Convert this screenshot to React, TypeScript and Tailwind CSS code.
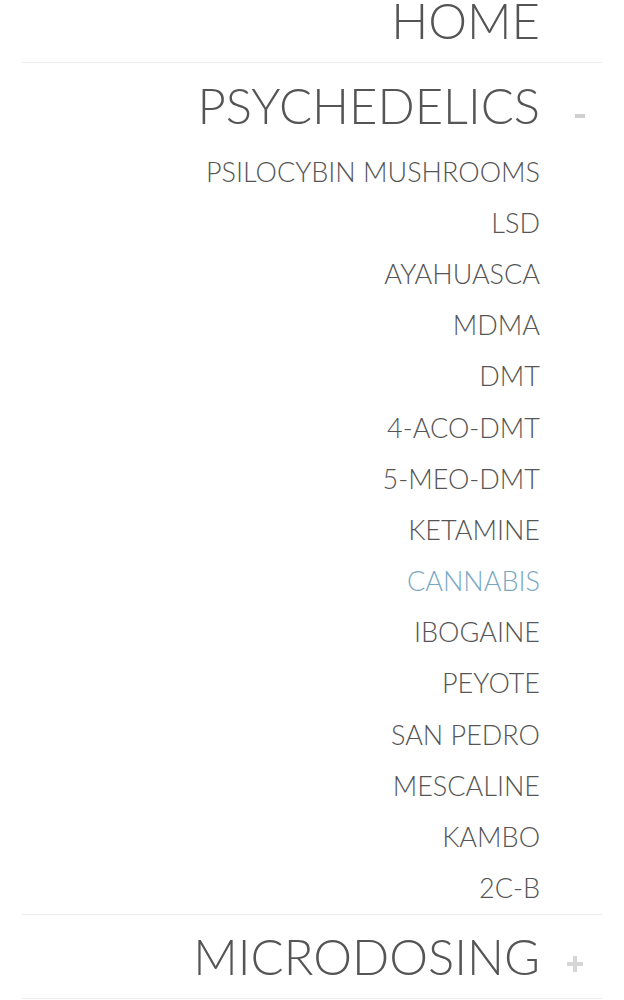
import React from "react";

const subItems = [
  "PSILOCYBIN MUSHROOMS",
  "LSD",
  "AYAHUASCA",
  "MDMA",
  "DMT",
  "4-ACO-DMT",
  "5-MEO-DMT",
  "KETAMINE",
  "CANNABIS",
  "IBOGAINE",
  "PEYOTE",
  "SAN PEDRO",
  "MESCALINE",
  "KAMBO",
  "2C-B",
];

function Sign({ kind }: { kind?: "-" | "+" }) {
  if (kind === "-") {
    return (
      <div className="flex w-[62px] shrink-0 justify-end pr-[17px] pt-[22px]">
        <div className="h-[4px] w-[10px] bg-[#d0d0d0]" />
      </div>
    );
  }
  return (
    <div className="flex w-[62px] shrink-0 justify-end pr-[19px] pt-[15px]">
      <div className="relative h-[16px] w-[16px]">
        <div className="absolute left-0 top-[6px] h-[4px] w-[16px] bg-[#d6d6d6]" />
        <div className="absolute left-[6px] top-0 h-[16px] w-[4px] bg-[#d6d6d6]" />
      </div>
    </div>
  );
}

function TopItem({ label, sign, className = "" }: { label: string; sign: "-" | "+"; className?: string }) {
  return (
    <div className={"flex items-center justify-end " + className}>
      <span className="text-[49px] leading-[48px] font-light text-[#555]">{label}</span>
      <Sign kind={sign} />
    </div>
  );
}

export default function App() {
  return (
    <div className="min-h-screen overflow-hidden bg-white font-['Lato',sans-serif]">
      <div className="mx-[22px]">
        <div className="flex h-[63px] items-start justify-end border-b border-[#ececec] pr-[62px]">
          <span className="text-[49px] leading-[40px] font-light text-[#555]">HOME</span>
        </div>
        <div className="border-b border-[#ececec]">
          <TopItem label="PSYCHEDELICS" sign="-" className="h-[83px]" />
          <ul>
            {subItems.map((s) => (
              <li
                key={s}
                className={
                  "flex h-[51.2px] items-center justify-end pb-[1px] pr-[62px] text-[27px] leading-[27px] font-light " +
                  (s === "CANNABIS" ? "text-[#7aa8c4]" : "text-[#555]")
                }
              >
                {s}
              </li>
            ))}
          </ul>
        </div>
        <TopItem label="MICRODOSING" sign="+" className="h-[84px] border-b border-[#ececec]" />
      </div>
    </div>
  );
}
